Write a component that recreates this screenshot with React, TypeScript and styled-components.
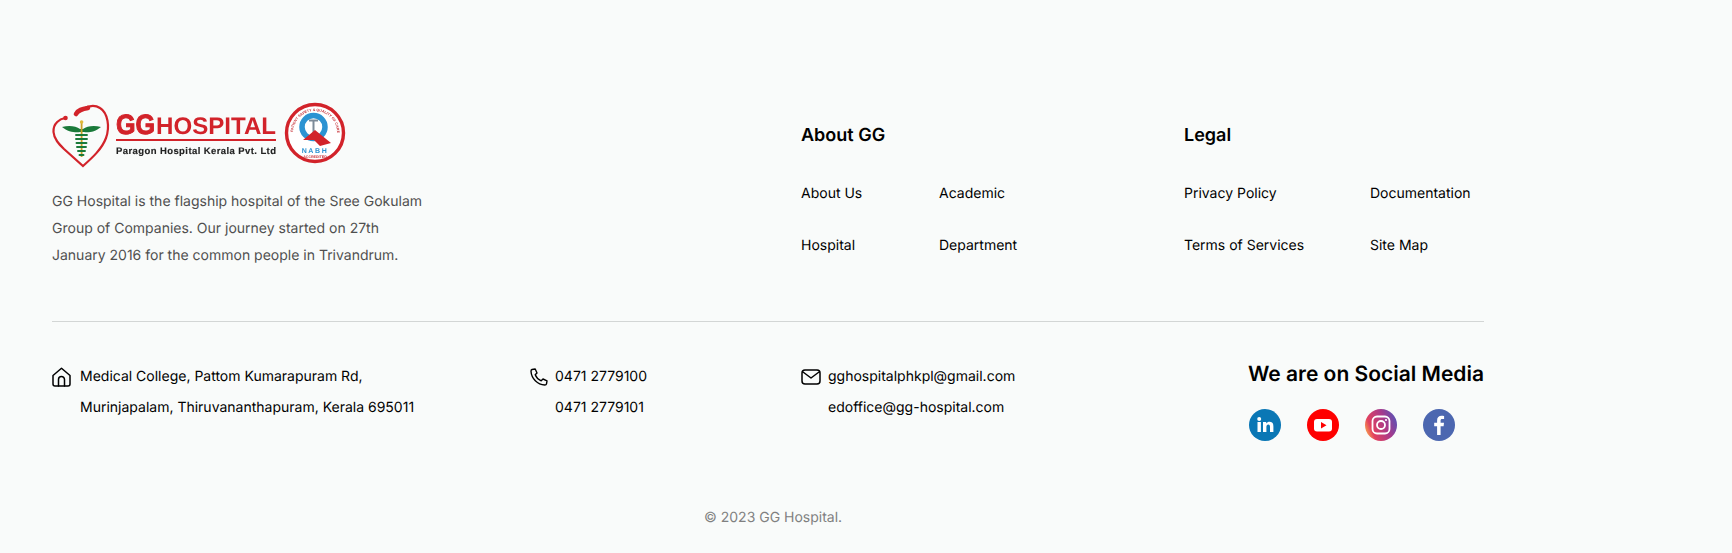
import React from "react";
import styled, { createGlobalStyle } from "styled-components";

const Global = createGlobalStyle`
  html, body { margin: 0; padding: 0; background: #f9fbfa; }
  body { font-family: Inter, "Liberation Sans", sans-serif; color: #000; text-rendering: geometricPrecision; }
`;

const Footer = styled.footer`
  box-sizing: border-box;
  width: 1732px;
  height: 553px;
  padding: 105px 248px 0 52px;
  background: #f9fbfa;
`;

const TopRow = styled.div`
  display: grid;
  grid-template-columns: 749px 383px 1fr;
  height: 216px;
  border-bottom: 1px solid #d3d6d5;
`;

const Brand = styled.div`
  display: flex;
  flex-direction: column;
  align-items: flex-start;
`;

const Logo = styled.svg`
  display: block;
  width: 296px;
  height: 64px;
  overflow: visible;
  filter: blur(0.35px);
`;

const About = styled.p`
  margin: 19px 0 0;
  width: 380px;
  font-size: 14px;
  line-height: 27px;
  color: #4f4f4f;
`;

const LinkColumn = styled.div`
  padding-top: 20px;
`;

const Heading = styled.h3`
  margin: 0;
  font-size: 18px;
  line-height: 22px;
  font-weight: 600;
`;

const Links = styled.div<{ $first: number }>`
  display: grid;
  grid-template-columns: ${(p) => p.$first}px auto;
  justify-content: start;
  row-gap: 35px;
  margin-top: 38px;
`;

const FooterLink = styled.a`
  font-size: 14px;
  line-height: 17px;
  color: #000;
`;

const BottomRow = styled.div`
  display: grid;
  grid-template-columns: 478px 271px 1fr auto;
  padding-top: 39px;
`;

const Contact = styled.div<{ $gap: number }>`
  display: grid;
  grid-template-columns: auto 1fr;
  column-gap: ${(p) => p.$gap}px;
  align-content: start;
`;

const ContactIcon = styled.span`
  display: flex;
  align-self: center;
  color: #000;
`;

const ContactText = styled.div`
  grid-column: 2;
  font-size: 14px;
  line-height: 31px;
  color: #000;
`;

const SocialBlock = styled.div`
  display: flex;
  flex-direction: column;
  padding-top: 1px;
`;

const SocialTitle = styled.h3`
  margin: 0;
  font-size: 21px;
  line-height: 25px;
  font-weight: 600;
`;

const SocialIcons = styled.div`
  display: flex;
  gap: 26px;
  margin-top: 22px;
  padding-left: 1px;
`;

const SocialIcon = styled.svg`
  display: block;
  width: 32px;
  height: 32px;
`;

const Copyright = styled.div`
  margin: 68px 0 0 652px;
  font-size: 14px;
  line-height: 17px;
  color: #808080;
`;

const GGLogo = () => (
  <Logo viewBox="0 0 296 64" aria-label="GG Hospital">
    {/* heart stethoscope */}
    <path
      d="M13 13 C8 14 1 18 1.5 27 C2 34 7 39 12 44 L31 61 C40 53 50 44 54 33 C58 22 56 8 48 3 C42 -1 36 1 31 4"
      fill="none" stroke="#d2232a" strokeWidth="2.2" strokeLinecap="round"
    />
    <path d="M24 9 C26 5 30 4 36 3" fill="none" stroke="#d2232a" strokeWidth="4.6" strokeLinecap="round" />
    <circle cx="13.5" cy="13" r="2.3" fill="#d2232a" />
    {/* caduceus */}
    <path d="M10 22 C17 20 24 21 28 24 L31 24 C35 21 42 20 49 22 C43 27 36 28 32 27 L28 27 C24 28 16 27 10 22 Z" fill="#1a7a3a" />
    <rect x="28.7" y="17" width="1.8" height="35" fill="#c9a227" />
    <circle cx="29.6" cy="17" r="1.8" fill="#e0b93a" />
    <path d="M24 30 H35 M24 34 H35 M24.5 38 H34.5 M25 42 H34 M26 46 H33 M27.5 50 H31.5" stroke="#1a7a3a" strokeWidth="1.9" strokeLinecap="round" />
    {/* wordmark */}
    <text x="64" y="29" fontFamily="'Liberation Sans', sans-serif" fontWeight="700" fontSize="28" stroke="#d2232a" strokeWidth="1" fill="#d2232a" textLength="39" lengthAdjust="spacingAndGlyphs">GG</text>
    <text x="104" y="29" fontFamily="'Liberation Sans', sans-serif" fontWeight="700" fontSize="24" fill="#d2232a" textLength="120" lengthAdjust="spacingAndGlyphs">HOSPITAL</text>
    <rect x="64" y="34" width="160" height="2" fill="#d2232a" />
    <text x="64" y="49" fontFamily="'Liberation Sans', sans-serif" fontWeight="700" fontSize="9.5" stroke="#222" strokeWidth="0.15" fill="#222" textLength="160" lengthAdjust="spacing">Paragon Hospital Kerala Pvt. Ltd</text>
    {/* NABH badge */}
    <circle cx="263" cy="28" r="28.5" fill="#fff" stroke="#d2232a" strokeWidth="3.4" />
    <defs>
      <path id="badgeArc" d="M241 28 A22 22 0 0 1 285 28" />
    </defs>
    <text fontFamily="'Liberation Sans', sans-serif" fontWeight="700" fontSize="3.6" fill="#c8343a">
      <textPath href="#badgeArc" startOffset="1">PATIENT SAFETY &amp; QUALITY OF CARE</textPath>
    </text>
    <circle cx="261.5" cy="22" r="11.5" fill="#fff" stroke="#2c93d2" strokeWidth="5.5" />
    <path d="M257 15.5 H266 M261.5 15.5 V28" stroke="#7d8b99" strokeWidth="2" />
    <path d="M251 35 L263 25 L279 38 L268 41 L262 35 Z" fill="#d2232a" />
    <text x="263" y="47.5" textAnchor="middle" fontFamily="'Liberation Sans', sans-serif" fontWeight="700" fontSize="7" letterSpacing="1.6" fill="#2c93d2">NABH</text>
    <text x="263" y="53" textAnchor="middle" fontFamily="'Liberation Sans', sans-serif" fontWeight="700" fontSize="3.6" fill="#c8343a">ACCREDITED</text>
  </Logo>
);

const HomeIcon = () => (
  <svg width="19" height="20" viewBox="0 0 19 20" fill="none" stroke="#000" strokeWidth="1.5" strokeLinejoin="round" strokeLinecap="round">
    <path d="M1 8.5 L9.5 1.2 L18 8.5 V17 A2 2 0 0 1 16 19 H3 A2 2 0 0 1 1 17 Z" />
    <path d="M6.5 19 V12.5 A3 3 0 0 1 12.5 12.5 V19" />
  </svg>
);

const PhoneIcon = () => (
  <svg width="18" height="18" viewBox="0 0 18 18" fill="none" stroke="#000" strokeWidth="1.4" strokeLinejoin="round">
    <path d="M2 1.5 L5.2 1 L7 5 L5.2 6.8 C6.2 9.3 8.6 11.8 11.2 12.8 L13 11 L17 12.8 L16.5 15.8 C16.3 16.6 15.6 17 14.8 17 C7.5 16.6 1.4 10.5 1 3.2 C1 2.4 1.3 1.7 2 1.5 Z" />
  </svg>
);

const MailIcon = () => (
  <svg width="20" height="16" viewBox="0 0 20 16" fill="none" stroke="#000" strokeWidth="1.5" strokeLinejoin="round" strokeLinecap="round">
    <rect x="1" y="1" width="18" height="14" rx="3" />
    <path d="M2 3 L10 9 L18 3" />
  </svg>
);

const Linkedin = () => (
  <SocialIcon viewBox="0 0 32 32">
    <circle cx="16" cy="16" r="16" fill="#0a77b5" />
    <rect x="8.5" y="13" width="3.4" height="10" fill="#fff" />
    <circle cx="10.2" cy="9.9" r="2" fill="#fff" />
    <path d="M14 13 H17.2 V14.5 C18 13.3 19.2 12.8 20.6 12.8 C23.4 12.8 24.4 14.6 24.4 17.4 V23 H21 V18 C21 16.6 20.6 15.6 19.3 15.6 C18 15.6 17.4 16.6 17.4 18 V23 H14 Z" fill="#fff" />
  </SocialIcon>
);

const Youtube = () => (
  <SocialIcon viewBox="0 0 32 32">
    <circle cx="16" cy="16" r="16" fill="#fe0000" />
    <rect x="7" y="10" width="18" height="12.6" rx="3" fill="#fff" />
    <path d="M14 13 L19.5 16.3 L14 19.6 Z" fill="#fe0000" />
  </SocialIcon>
);

const Instagram = () => (
  <SocialIcon viewBox="0 0 32 32">
    <defs>
      <linearGradient id="ig" x1="0" y1="0.7" x2="1" y2="0.3">
        <stop offset="0" stopColor="#f9a24e" />
        <stop offset="0.2" stopColor="#e2415f" />
        <stop offset="0.65" stopColor="#a63a8c" />
        <stop offset="1" stopColor="#5a52b5" />
      </linearGradient>
    </defs>
    <circle cx="16" cy="16" r="16" fill="url(#ig)" />
    <rect x="7.5" y="7.5" width="17" height="17" rx="4.5" fill="none" stroke="#fff" strokeWidth="1.8" />
    <circle cx="16" cy="16" r="4" fill="none" stroke="#fff" strokeWidth="1.8" />
    <circle cx="21" cy="11" r="1.1" fill="#fff" />
  </SocialIcon>
);

const Facebook = () => (
  <SocialIcon viewBox="0 0 32 32">
    <circle cx="16" cy="16" r="16" fill="#4c67b0" />
    <path d="M17.6 26 V17.2 H20.6 L21 13.7 H17.6 V11.6 C17.6 10.6 17.9 10 19.3 10 H21.1 V6.9 C20.7 6.8 19.7 6.7 18.5 6.7 C15.9 6.7 14.1 8.3 14.1 11.2 V13.7 H11.2 V17.2 H14.1 V26 Z" fill="#fff" />
  </SocialIcon>
);

export default function App() {
  return (
    <>
      <Global />
      <Footer>
        <TopRow>
          <Brand>
            <GGLogo />
            <About>
              GG Hospital is the flagship hospital of the Sree Gokulam
              <br />
              Group of Companies. Our journey started on 27th
              <br />
              January 2016 for the common people in Trivandrum.
            </About>
          </Brand>
          <LinkColumn>
            <Heading>About GG</Heading>
            <Links $first={138}>
              <FooterLink>About Us</FooterLink>
              <FooterLink>Academic</FooterLink>
              <FooterLink>Hospital</FooterLink>
              <FooterLink>Department</FooterLink>
            </Links>
          </LinkColumn>
          <LinkColumn>
            <Heading>Legal</Heading>
            <Links $first={186}>
              <FooterLink>Privacy Policy</FooterLink>
              <FooterLink>Documentation</FooterLink>
              <FooterLink>Terms of Services</FooterLink>
              <FooterLink>Site Map</FooterLink>
            </Links>
          </LinkColumn>
        </TopRow>
        <BottomRow>
          <Contact $gap={9}>
            <ContactIcon><HomeIcon /></ContactIcon>
            <ContactText>Medical College, Pattom Kumarapuram Rd,</ContactText>
            <ContactText>Murinjapalam, Thiruvananthapuram, Kerala 695011</ContactText>
          </Contact>
          <Contact $gap={7}>
            <ContactIcon><PhoneIcon /></ContactIcon>
            <ContactText>0471 2779100</ContactText>
            <ContactText>0471 2779101</ContactText>
          </Contact>
          <Contact $gap={7}>
            <ContactIcon><MailIcon /></ContactIcon>
            <ContactText>gghospitalphkpl@gmail.com</ContactText>
            <ContactText>edoffice@gg-hospital.com</ContactText>
          </Contact>
          <SocialBlock>
            <SocialTitle>We are on Social Media</SocialTitle>
            <SocialIcons>
              <Linkedin />
              <Youtube />
              <Instagram />
              <Facebook />
            </SocialIcons>
          </SocialBlock>
        </BottomRow>
        <Copyright>© 2023 GG Hospital.</Copyright>
      </Footer>
    </>
  );
}
